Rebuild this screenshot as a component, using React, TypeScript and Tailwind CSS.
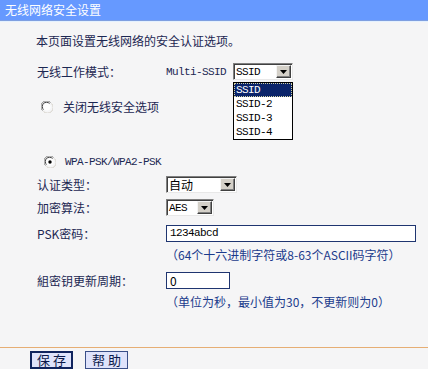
import React from 'react';

// Classic router config page: wireless security settings
const cjk = { fontFamily: '"Noto Sans CJK SC", "Liberation Sans", sans-serif' };
const mono = { fontFamily: '"Liberation Mono", "Noto Sans CJK SC", monospace', letterSpacing: '-0.6px' };

const ArrowBox: React.FC = () => (
  <div className="flex h-full w-[15px] shrink-0 items-center justify-center border border-[#f4f4f4] border-r-[#404040] border-b-[#404040] bg-[#d4d0c8] shadow-[inset_-1px_-1px_0_#808080]">
    <svg width="7" height="4" viewBox="0 0 7 4">
      <polygon points="0,0 7,0 3.5,4" fill="#000" />
    </svg>
  </div>
);

interface FakeSelectProps {
  value: string;
  width: string;
  isMono?: boolean;
}

const FakeSelect: React.FC<FakeSelectProps> = ({ value, width, isMono }) => (
  <div
    className={`flex h-[17px] items-stretch border border-[#808080] border-r-[#e8e8e8] border-b-[#e8e8e8] bg-white p-[1px] pl-[2px] shadow-[inset_1px_1px_0_#404040] ${width}`}
  >
    <span
      className={`flex-1 leading-[14px] text-black ${isMono ? 'text-[11px]' : 'text-[12px]'}`}
      style={isMono ? mono : cjk}
    >
      {value}
    </span>
    <ArrowBox />
  </div>
);

const Radio: React.FC<{ checked?: boolean }> = ({ checked }) => (
  <svg width="12" height="12" viewBox="0 0 12 12">
    <path d="M1.5 9.5 A5 5 0 0 1 9.5 1.5" stroke="#808080" strokeWidth="1" fill="none" />
    <path d="M2.5 8.5 A4 4 0 0 1 8.5 2.5" stroke="#404040" strokeWidth="1" fill="none" />
    <circle cx="6" cy="6" r="3.6" fill="#fff" />
    <path d="M10.5 2.5 A5 5 0 0 1 2.5 10.5" stroke="#d4d0c8" strokeWidth="1" fill="none" />
    {checked && <circle cx="6" cy="6" r="1.7" fill="#000" />}
  </svg>
);

const Label: React.FC<{ text: string }> = ({ text }) => (
  <div className="w-[129px] shrink-0 text-[12px] leading-[16px] text-[#1c2752]" style={cjk}>
    {text}
  </div>
);

const App: React.FC = () => {
  return (
    <div className="h-[369px] w-[428px] overflow-hidden bg-[#f5f5f6]">
      {/* title bar */}
      <div className="flex h-[21px] items-center border-b border-[#7f9fe0] bg-[#6699ff] pl-[5px]">
        <span className="text-[12px] leading-[16px] text-white" style={cjk}>
          无线网络安全设置
        </span>
      </div>
      <div className="h-[1px] bg-[#e4f1ff]" />

      <div className="pl-[36px]">
        <div className="mt-[10px] h-[18px] text-[12px] leading-[18px] text-[#1c2752]" style={cjk}>
          本页面设置无线网络的安全认证选项。
        </div>

        {/* mode row */}
        <div className="mt-[13px] flex h-[17px] items-center pl-[1px]">
          <Label text="无线工作模式：" />
          <span className="w-[67px] text-[11px] leading-[14px] text-[#1c2752]" style={mono}>
            Multi-SSID
          </span>
          <div className="relative">
            <FakeSelect value="SSID" width="w-[60px]" isMono />
            <div className="absolute left-0 top-[19px] z-10 w-[60px] border border-black bg-white">
              <div className="h-[14px] border border-dotted border-[#d0d0a0] bg-[#0a246a] pl-[1px] text-[11px] leading-[12px] text-white" style={mono}>
                SSID
              </div>
              {['SSID-2', 'SSID-3', 'SSID-4'].map((s) => (
                <div key={s} className="h-[14px] pl-[2px] text-[11px] leading-[14px] text-black" style={mono}>
                  {s}
                </div>
              ))}
            </div>
          </div>
        </div>

        {/* radio: off */}
        <div className="mt-[20px] flex h-[14px] items-center gap-[10px] pl-[5px]">
          <Radio />
          <span className="text-[12px] leading-[14px] text-[#1c2752]" style={cjk}>
            关闭无线安全选项
          </span>
        </div>

        {/* radio: wpa */}
        <div className="mt-[41px] flex h-[14px] items-center gap-[9px] pl-[8px]">
          <Radio checked />
          <span className="text-[11px] leading-[14px] text-[#1c2752]" style={mono}>
            WPA-PSK/WPA2-PSK
          </span>
        </div>

        <div className="mt-[7px] flex h-[17px] items-center pl-[1px]">
          <Label text="认证类型：" />
          <FakeSelect value="自动" width="w-[71px]" />
        </div>

        <div className="mt-[6px] flex h-[17px] items-center pl-[1px]">
          <Label text="加密算法：" />
          <FakeSelect value="AES" width="w-[48px]" isMono />
        </div>

        <div className="mt-[9px] flex h-[17px] items-center pl-[1px]">
          <Label text="PSK密码：" />
          <div className="flex h-[17px] w-[250px] items-center border border-[#1f3570] bg-white pl-[3px] text-[11px] text-black" style={mono}>
            1234abcd
          </div>
        </div>

        <div className="mt-[5px] pl-[130px] text-[12px] leading-[16px] text-[#1b3b8c]" style={cjk}>
          （64个十六进制字符或8-63个ASCII码字符）
        </div>

        <div className="mt-[9px] flex h-[17px] items-center pl-[1px]">
          <Label text="組密钥更新周期：" />
          <div className="flex h-[17px] w-[64px] items-center border border-[#1f3570] bg-white pl-[3px] text-[12px] text-black" style={cjk}>
            0
          </div>
        </div>

        <div className="mt-[5px] pl-[130px] text-[12px] leading-[16px] text-[#1b3b8c]" style={cjk}>
          （单位为秒，最小值为30，不更新则为0）
        </div>
      </div>

      <div className="mt-[37px] h-[1px] bg-[#e6ae74]" />

      <div className="mt-[3px] flex gap-[12px] pl-[30px]">
        <button className="flex h-[18px] w-[43px] items-center justify-center border-2 border-[#10245e] bg-[#dfe3fb] text-[13px] leading-[14px] text-[#0c1a4a]" style={cjk}>
          保 存
        </button>
        <button className="flex h-[18px] w-[43px] items-center justify-center border border-[#3a4f88] bg-[#dfe3fb] text-[13px] leading-[14px] text-[#0c1a4a]" style={cjk}>
          帮 助
        </button>
      </div>
    </div>
  );
};

export default App;
